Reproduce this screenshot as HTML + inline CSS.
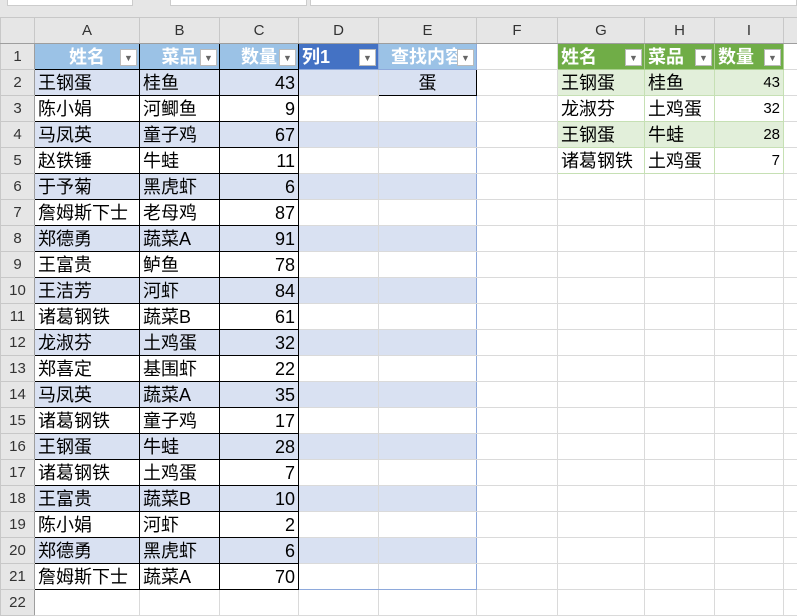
<!DOCTYPE html>
<html><head><meta charset="utf-8"><style>
*{margin:0;padding:0;box-sizing:border-box}
body{width:797px;height:602px;overflow:hidden;background:#fff;font-family:"Liberation Sans","Noto Sans CJK SC",sans-serif;position:relative}
.top{position:absolute;left:0;top:0;width:797px;height:17px;background:#e6e6e6}
.top div{position:absolute;top:0;height:6px;background:#fff;border:1px solid #ccc;border-top:none}
table{position:absolute;left:0;top:17px;border-collapse:collapse;table-layout:fixed;width:813px;min-width:813px}
td{height:26px;border:1px solid #dadada;font-size:18px;padding:0 3px;white-space:nowrap;overflow:hidden;position:relative;color:#000;line-height:24px}
tr.h td{background:#e6e6e6;text-align:center;font-size:15px;color:#333;border-color:#c8c8c8;border-bottom:1px solid #9e9e9e}
td.rh{background:#e6e6e6;text-align:center;font-size:15px;color:#333;border-color:#c8c8c8;border-right:1px solid #9e9e9e}
.b{border:1px solid #000}
.f{background:#d9e1f2}
.n{text-align:right}
.th{background:#9bc2e6;color:#fff;font-weight:bold;text-align:center;border:1px solid #000}
.th2{background:#4472c4;color:#fff;font-weight:bold;border-color:#8ea9db}
.th3{background:#9bc2e6;color:#fff;font-weight:bold;border-color:#8ea9db;padding-left:12px}
.g{background:#70ad47;color:#fff;font-weight:bold;border-color:#a9d08e}
.gl{border-color:#c6e0b4}
.gf{background:#e2efda}
.dd{position:absolute;right:2px;top:5px;width:17px;height:17px;background:#fff;border:1px solid #bbb;font-size:9px;color:#666;text-align:center;line-height:16px;font-weight:normal}
.ex{border-right:1px solid #8ea9db}
</style></head><body>
<div class="top"><div style="left:7px;width:126px"></div><div style="left:170px;width:137px"></div><div style="left:310px;width:487px"></div></div>
<table>
<colgroup><col style="width:34px"><col style="width:105px"><col style="width:80px"><col style="width:79px"><col style="width:80px"><col style="width:98px"><col style="width:81px"><col style="width:87px"><col style="width:70px"><col style="width:69px"><col style="width:30px"></colgroup>
<tr class="h"><td></td><td>A</td><td>B</td><td>C</td><td>D</td><td>E</td><td>F</td><td>G</td><td>H</td><td>I</td><td></td></tr>
<tr><td class="rh">1</td><td class="th">姓名<span class="dd">▼</span></td><td class="th">菜品<span class="dd">▼</span></td><td class="th">数量<span class="dd">▼</span></td><td class="th2">列1<span class="dd">▼</span></td><td class="th3 ex">查找内容<span class="dd">▼</span></td><td></td><td class="g">姓名<span class="dd">▼</span></td><td class="g">菜品<span class="dd">▼</span></td><td class="g">数量<span class="dd">▼</span></td><td></td></tr>
<tr><td class="rh">2</td><td class="b f">王钢蛋</td><td class="b f">桂鱼</td><td class="b f n">43</td><td class="f"></td><td class="b f" style="text-align:center">蛋</td><td></td><td class="gl gf">王钢蛋</td><td class="gl gf">桂鱼</td><td class="gl gf n" style="font-size:15px">43</td><td></td></tr>
<tr><td class="rh">3</td><td class="b">陈小娟</td><td class="b">河鲫鱼</td><td class="b n">9</td><td></td><td class="ex"></td><td></td><td class="gl">龙淑芬</td><td class="gl">土鸡蛋</td><td class="gl n" style="font-size:15px">32</td><td></td></tr>
<tr><td class="rh">4</td><td class="b f">马凤英</td><td class="b f">童子鸡</td><td class="b f n">67</td><td class="f"></td><td class="f ex"></td><td></td><td class="gl gf">王钢蛋</td><td class="gl gf">牛蛙</td><td class="gl gf n" style="font-size:15px">28</td><td></td></tr>
<tr><td class="rh">5</td><td class="b">赵铁锤</td><td class="b">牛蛙</td><td class="b n">11</td><td></td><td class="ex"></td><td></td><td class="gl">诸葛钢铁</td><td class="gl">土鸡蛋</td><td class="gl n" style="font-size:15px">7</td><td></td></tr>
<tr><td class="rh">6</td><td class="b f">于予菊</td><td class="b f">黑虎虾</td><td class="b f n">6</td><td class="f"></td><td class="f ex"></td><td></td><td></td><td></td><td></td><td></td></tr>
<tr><td class="rh">7</td><td class="b">詹姆斯下士</td><td class="b">老母鸡</td><td class="b n">87</td><td></td><td class="ex"></td><td></td><td></td><td></td><td></td><td></td></tr>
<tr><td class="rh">8</td><td class="b f">郑德勇</td><td class="b f">蔬菜A</td><td class="b f n">91</td><td class="f"></td><td class="f ex"></td><td></td><td></td><td></td><td></td><td></td></tr>
<tr><td class="rh">9</td><td class="b">王富贵</td><td class="b">鲈鱼</td><td class="b n">78</td><td></td><td class="ex"></td><td></td><td></td><td></td><td></td><td></td></tr>
<tr><td class="rh">10</td><td class="b f">王洁芳</td><td class="b f">河虾</td><td class="b f n">84</td><td class="f"></td><td class="f ex"></td><td></td><td></td><td></td><td></td><td></td></tr>
<tr><td class="rh">11</td><td class="b">诸葛钢铁</td><td class="b">蔬菜B</td><td class="b n">61</td><td></td><td class="ex"></td><td></td><td></td><td></td><td></td><td></td></tr>
<tr><td class="rh">12</td><td class="b f">龙淑芬</td><td class="b f">土鸡蛋</td><td class="b f n">32</td><td class="f"></td><td class="f ex"></td><td></td><td></td><td></td><td></td><td></td></tr>
<tr><td class="rh">13</td><td class="b">郑喜定</td><td class="b">基围虾</td><td class="b n">22</td><td></td><td class="ex"></td><td></td><td></td><td></td><td></td><td></td></tr>
<tr><td class="rh">14</td><td class="b f">马凤英</td><td class="b f">蔬菜A</td><td class="b f n">35</td><td class="f"></td><td class="f ex"></td><td></td><td></td><td></td><td></td><td></td></tr>
<tr><td class="rh">15</td><td class="b">诸葛钢铁</td><td class="b">童子鸡</td><td class="b n">17</td><td></td><td class="ex"></td><td></td><td></td><td></td><td></td><td></td></tr>
<tr><td class="rh">16</td><td class="b f">王钢蛋</td><td class="b f">牛蛙</td><td class="b f n">28</td><td class="f"></td><td class="f ex"></td><td></td><td></td><td></td><td></td><td></td></tr>
<tr><td class="rh">17</td><td class="b">诸葛钢铁</td><td class="b">土鸡蛋</td><td class="b n">7</td><td></td><td class="ex"></td><td></td><td></td><td></td><td></td><td></td></tr>
<tr><td class="rh">18</td><td class="b f">王富贵</td><td class="b f">蔬菜B</td><td class="b f n">10</td><td class="f"></td><td class="f ex"></td><td></td><td></td><td></td><td></td><td></td></tr>
<tr><td class="rh">19</td><td class="b">陈小娟</td><td class="b">河虾</td><td class="b n">2</td><td></td><td class="ex"></td><td></td><td></td><td></td><td></td><td></td></tr>
<tr><td class="rh">20</td><td class="b f">郑德勇</td><td class="b f">黑虎虾</td><td class="b f n">6</td><td class="f"></td><td class="f ex"></td><td></td><td></td><td></td><td></td><td></td></tr>
<tr><td class="rh">21</td><td class="b">詹姆斯下士</td><td class="b">蔬菜A</td><td class="b n">70</td><td style="border-bottom:1px solid #8ea9db"></td><td class="ex" style="border-bottom:1px solid #8ea9db"></td><td></td><td></td><td></td><td></td><td></td></tr>
<tr><td class="rh">22</td><td></td><td></td><td></td><td></td><td></td><td></td><td></td><td></td><td></td><td></td></tr>
</table>
</body></html>
